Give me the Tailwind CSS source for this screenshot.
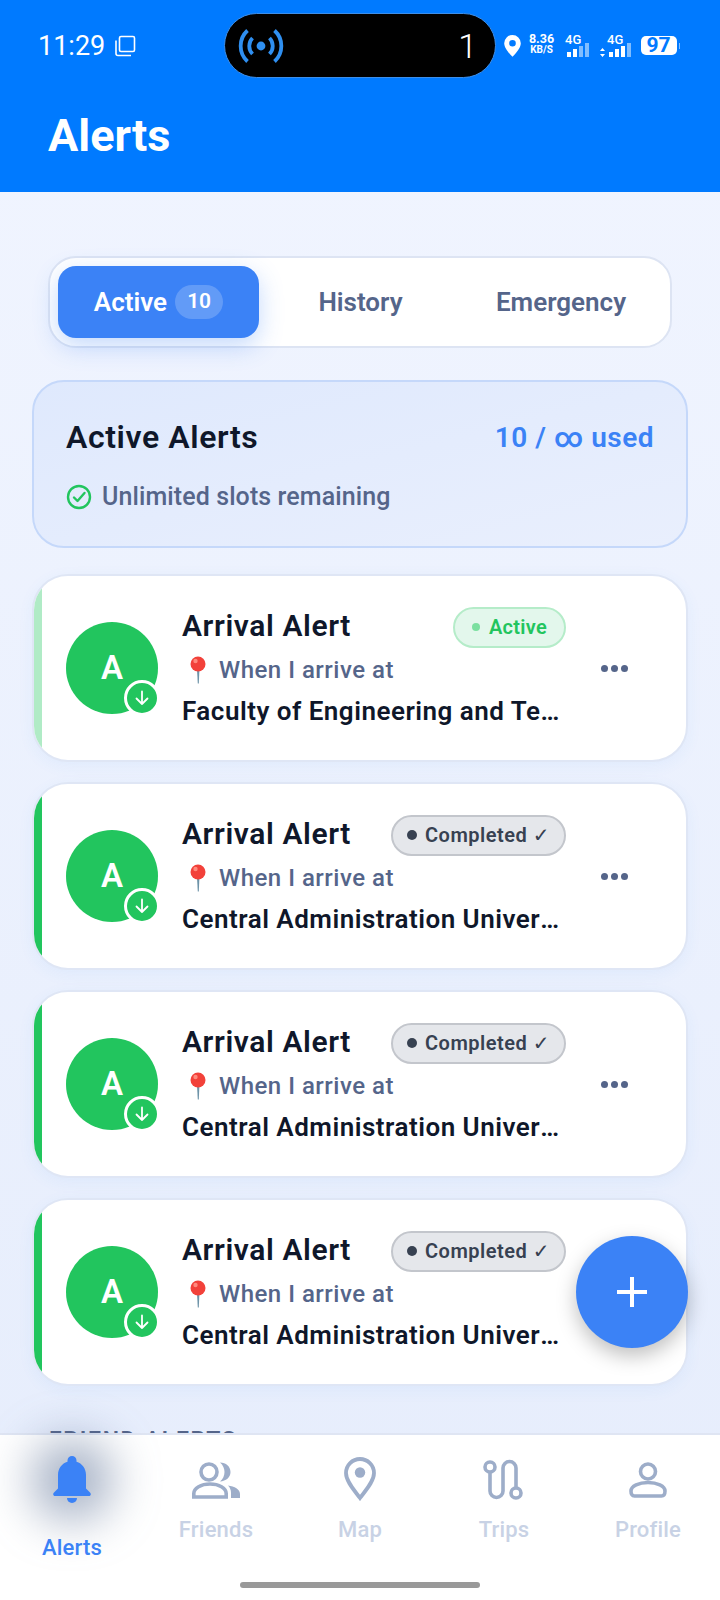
<!DOCTYPE html>
<html lang="en">
<head>
    <meta charset="UTF-8">
    <meta name="viewport" content="width=device-width, initial-scale=1.0">
    <title>Alerts</title>
    <script src="https://cdn.jsdelivr.net/npm/@tailwindcss/browser@4"></script>
</head>
<body class="font-['Roboto',sans-serif]">
<div class="relative w-[720px] h-[1600px] overflow-hidden flex flex-col bg-gradient-to-b from-[#f1f5ff] to-[#e6edfc]">

    <!-- Header -->
    <header class="h-[192px] shrink-0 bg-[#007aff] text-white">
        <div class="h-[111px] pt-[13px] flex items-start">
            <div class="w-[224px] pl-[38px] pt-[18px] flex items-center gap-[9px]">
                <span class="text-[27px] leading-[30px]">11:29</span>
                <svg class="w-[22px] h-[22px]" viewBox="0 0 22 22" fill="none" stroke="white" stroke-width="1.600">
                    <rect x="5.500" y="1.500" width="15" height="15" rx="1.500"></rect>
                    <path d="M2 5.500v13a2 2 0 0 0 2 2h13"></path>
                </svg>
            </div>
            <!-- camera pill -->
            <div class="w-[272px] h-[65px] rounded-full bg-black border border-[#3d8ee8] flex items-center justify-between pl-[13px] pr-[18px]">
                <svg class="w-[46px] h-[34px]" viewBox="0 0 46 34" fill="none" stroke="#2f8ff0" stroke-width="3.800">
                    <circle cx="23" cy="17" r="4.400" fill="#2f8ff0" stroke="none"></circle>
                    <path d="M14.500 9a11.500 11.500 0 0 0 0 16"></path>
                    <path d="M31.500 9a11.500 11.500 0 0 1 0 16"></path>
                    <path d="M9.500 1.500a21 21 0 0 0 0 31"></path>
                    <path d="M36.500 1.500a21 21 0 0 1 0 31"></path>
                </svg>
                <span class="text-[34px] font-light leading-none">1</span>
            </div>
            <div class="flex items-end pl-[8px] h-[44px]">
                <svg class="w-[17px] h-[22px]" viewBox="0 0 17 22" fill="white">
                    <path fill-rule="evenodd" d="M8.500 0a8.300 8.300 0 0 1 8.300 8.300c0 4.700-5 10.200-8.300 13.500C5.200 18.500.2 13 .2 8.300A8.300 8.300 0 0 1 8.500 0zm0 5a3.300 3.300 0 1 0 0 6.600 3.300 3.300 0 0 0 0-6.600z"></path>
                </svg>
                <div class="w-[25px] ml-[8px] mb-[2px] flex flex-col items-center font-bold">
                    <span class="text-[12.500px] leading-[12px]">8.36</span>
                    <span class="text-[10px] leading-[10px]">KB/S</span>
                </div>
                <div class="ml-[11px] w-[23px] flex flex-col items-start">
                    <span class="text-[13px] font-medium leading-[14px] mb-[-4px]">4G</span>
                    <div class="flex items-end gap-[2.500px] h-[14px] pl-[2px]">
                        <i class="w-[3.500px] h-[5px] bg-white"></i>
                        <i class="w-[3.500px] h-[8px] bg-white"></i>
                        <i class="w-[3.500px] h-[11px] bg-white/50"></i>
                        <i class="w-[3.500px] h-[14px] bg-white/50"></i>
                    </div>
                </div>
                <div class="ml-[12px] flex items-end">
                    <svg class="w-[5px] h-[9px] mr-[4px]" viewBox="0 0 5 9" fill="white"><path d="M2.500 0L5 3H0zM2.500 9L0 6h5z"></path></svg>
                    <div class="flex flex-col items-start">
                        <span class="text-[13px] font-medium leading-[14px] mb-[-4px] ml-[-2px]">4G</span>
                        <div class="flex items-end gap-[2.500px] h-[14px]">
                            <i class="w-[3.500px] h-[5px] bg-white"></i>
                            <i class="w-[3.500px] h-[8px] bg-white"></i>
                            <i class="w-[3.500px] h-[11px] bg-white"></i>
                            <i class="w-[3.500px] h-[14px] bg-white/50"></i>
                        </div>
                    </div>
                </div>
                <div class="ml-[10px] mb-[2px] flex items-center">
                    <div class="w-[36px] h-[19px] rounded-[5px] bg-white text-[#007aff] text-[21px] font-bold leading-[19px] text-center">97</div>
                    <i class="w-[1.500px] h-[6px] ml-[2px] bg-white/50"></i>
                </div>
            </div>
        </div>
        <h1 class="pl-[48px] text-[45px] font-bold leading-[50px]">Alerts</h1>
    </header>

    <!-- Tabs -->
    <div class="mt-[64px] mx-[48px] h-[92px] shrink-0 rounded-[28px] bg-white border-2 border-[#dde4f3] flex items-center pl-[8px]">
        <div class="w-[201px] h-[72px] rounded-[18px] bg-[#3b82f6] shadow-[0_8px_24px_rgba(59,130,246,0.3)] text-white text-[26px] font-semibold flex items-center justify-center gap-[8px]">
            Active
            <span class="w-[48px] h-[34px] rounded-full bg-white/20 text-[21px] flex items-center justify-center">10</span>
        </div>
        <div class="w-[203px] text-center text-[26px] font-semibold text-[#55658a]">History</div>
        <div class="w-[198px] text-center text-[26px] font-semibold text-[#55658a]">Emergency</div>
    </div>

    <!-- Usage summary -->
    <section class="mt-[32px] mx-[32px] h-[168px] shrink-0 rounded-[32px] border-2 border-[#c5d8fa] bg-gradient-to-br from-[#dfe9fd] to-[#e9effd] px-[32px] pt-[36px]">
        <div class="flex items-center justify-between h-[40px]">
            <h2 class="mb-[2px] text-[32px] font-semibold tracking-[0.6px] text-[#0f172a]">Active Alerts</h2>
            <span class="text-[28px] font-semibold tracking-[0.5px] text-[#3b82f6]">10 / ∞ used</span>
        </div>
        <div class="mt-[20px] flex items-center gap-[10px] text-[25px] font-medium tracking-[0.1px] text-[#55658a]">
            <svg class="w-[26px] h-[26px]" viewBox="0 0 26 26" fill="none" stroke="#22c55e" stroke-width="2.400" stroke-linecap="round" stroke-linejoin="round">
                <circle cx="13" cy="13" r="11"></circle>
                <path d="M8 13.500l3.500 3.500 7-8"></path>
            </svg>
            Unlimited slots remaining
        </div>
    </section>

    <!-- Alert cards -->
    <div class="mt-[26px] mx-[32px] flex flex-col gap-[20px] shrink-0">
        <article class="h-[188px] rounded-[36px] bg-white border-2 border-[#dfe6f5] shadow-[0_4px_16px_rgba(59,130,246,0.06)] overflow-hidden flex">
            <div class="w-[8px] bg-[#b0ebc6] shrink-0"></div>
            <div class="relative w-[92px] h-[92px] ml-[24px] mt-[46px] rounded-full bg-[#22c55e] text-white text-[33px] font-semibold flex items-center justify-center shrink-0">
                A
                <div class="absolute right-[-2px] bottom-[-2px] w-[36px] h-[36px] rounded-full bg-[#22c55e] border-[3px] border-white flex items-center justify-center">
                    <svg class="w-[18px] h-[18px]" viewBox="0 0 18 18" fill="none" stroke="white" stroke-width="1.800" stroke-linecap="round" stroke-linejoin="round"><path d="M9 2.500v12.500M3.500 9.500L9 15l5.500-5.500"></path></svg>
                </div>
            </div>
            <div class="w-[384px] ml-[24px] pt-[31px] shrink-0">
                <div class="h-[41px] flex items-center justify-between">
                    <h3 class="mb-[4px] text-[30px] font-semibold tracking-[0.6px] text-[#0f172a]">Arrival Alert</h3>
                    <span class="h-[41px] w-[113px] pb-[1px] rounded-full bg-[#e3f7ec] border-2 border-[#b5ecc9] text-[#22c55e] text-[20px] font-semibold tracking-[0.3px] flex items-center justify-center gap-[9px]">
                        <i class="w-[8px] h-[8px] rounded-full bg-[#7be0a0]"></i>Active
                    </span>
                </div>
                <div class="mt-[4px] h-[36px] flex items-center gap-[9px] pl-[4px] text-[24px] font-medium text-[#55658a] tracking-[0.5px]">
                    <svg class="w-[24px] h-[28px]" viewBox="0 0 24 28">
                        <path d="M11 14h2.400l-.6 13.500h-1z" fill="#6d93a8"></path>
                        <circle cx="12" cy="8" r="7.500" fill="#f2413a"></circle>
                        <circle cx="9.500" cy="5" r="2.200" fill="#ff8a7d"></circle>
                    </svg>
                    When I arrive at
                </div>
                <p class="mt-[6px] truncate text-[26px] leading-[34px] font-semibold text-[#0f172a] tracking-[0.5px]">Faculty of Engineering and Technology Building</p>
            </div>
            <div class="flex-1 flex items-center pl-[35px]">
                <div class="flex gap-[3px]"><i class="w-[7px] h-[7px] rounded-full bg-[#55658a]"></i><i class="w-[7px] h-[7px] rounded-full bg-[#55658a]"></i><i class="w-[7px] h-[7px] rounded-full bg-[#55658a]"></i></div>
            </div>
        </article>

        <article class="h-[188px] rounded-[36px] bg-white border-2 border-[#dfe6f5] shadow-[0_4px_16px_rgba(59,130,246,0.06)] overflow-hidden flex">
            <div class="w-[8px] bg-[#22c55e] shrink-0"></div>
            <div class="relative w-[92px] h-[92px] ml-[24px] mt-[46px] rounded-full bg-[#22c55e] text-white text-[33px] font-semibold flex items-center justify-center shrink-0">
                A
                <div class="absolute right-[-2px] bottom-[-2px] w-[36px] h-[36px] rounded-full bg-[#22c55e] border-[3px] border-white flex items-center justify-center">
                    <svg class="w-[18px] h-[18px]" viewBox="0 0 18 18" fill="none" stroke="white" stroke-width="1.800" stroke-linecap="round" stroke-linejoin="round"><path d="M9 2.500v12.500M3.500 9.500L9 15l5.500-5.500"></path></svg>
                </div>
            </div>
            <div class="w-[384px] ml-[24px] pt-[31px] shrink-0">
                <div class="h-[41px] flex items-center justify-between">
                    <h3 class="mb-[4px] text-[30px] font-semibold tracking-[0.6px] text-[#0f172a]">Arrival Alert</h3>
                    <span class="h-[41px] w-[175px] pb-[1px] rounded-full bg-[#e5e7eb] border-2 border-[#c3c6cc] text-[#374151] text-[20px] font-semibold tracking-[0.5px] flex items-center justify-center gap-[8px]">
                        <i class="w-[10px] h-[10px] rounded-full bg-[#374151]"></i><span>Completed <span class="font-normal font-['DejaVu_Sans',sans-serif]">✓</span></span>
                    </span>
                </div>
                <div class="mt-[4px] h-[36px] flex items-center gap-[9px] pl-[4px] text-[24px] font-medium text-[#55658a] tracking-[0.5px]">
                    <svg class="w-[24px] h-[28px]" viewBox="0 0 24 28">
                        <path d="M11 14h2.400l-.6 13.500h-1z" fill="#6d93a8"></path>
                        <circle cx="12" cy="8" r="7.500" fill="#f2413a"></circle>
                        <circle cx="9.500" cy="5" r="2.200" fill="#ff8a7d"></circle>
                    </svg>
                    When I arrive at
                </div>
                <p class="mt-[6px] truncate text-[26px] leading-[34px] font-semibold text-[#0f172a] tracking-[0.5px]">Central Administration University Building</p>
            </div>
            <div class="flex-1 flex items-center pl-[35px]">
                <div class="flex gap-[3px]"><i class="w-[7px] h-[7px] rounded-full bg-[#55658a]"></i><i class="w-[7px] h-[7px] rounded-full bg-[#55658a]"></i><i class="w-[7px] h-[7px] rounded-full bg-[#55658a]"></i></div>
            </div>
        </article>

        <article class="h-[188px] rounded-[36px] bg-white border-2 border-[#dfe6f5] shadow-[0_4px_16px_rgba(59,130,246,0.06)] overflow-hidden flex">
            <div class="w-[8px] bg-[#22c55e] shrink-0"></div>
            <div class="relative w-[92px] h-[92px] ml-[24px] mt-[46px] rounded-full bg-[#22c55e] text-white text-[33px] font-semibold flex items-center justify-center shrink-0">
                A
                <div class="absolute right-[-2px] bottom-[-2px] w-[36px] h-[36px] rounded-full bg-[#22c55e] border-[3px] border-white flex items-center justify-center">
                    <svg class="w-[18px] h-[18px]" viewBox="0 0 18 18" fill="none" stroke="white" stroke-width="1.800" stroke-linecap="round" stroke-linejoin="round"><path d="M9 2.500v12.500M3.500 9.500L9 15l5.500-5.500"></path></svg>
                </div>
            </div>
            <div class="w-[384px] ml-[24px] pt-[31px] shrink-0">
                <div class="h-[41px] flex items-center justify-between">
                    <h3 class="mb-[4px] text-[30px] font-semibold tracking-[0.6px] text-[#0f172a]">Arrival Alert</h3>
                    <span class="h-[41px] w-[175px] pb-[1px] rounded-full bg-[#e5e7eb] border-2 border-[#c3c6cc] text-[#374151] text-[20px] font-semibold tracking-[0.5px] flex items-center justify-center gap-[8px]">
                        <i class="w-[10px] h-[10px] rounded-full bg-[#374151]"></i><span>Completed <span class="font-normal font-['DejaVu_Sans',sans-serif]">✓</span></span>
                    </span>
                </div>
                <div class="mt-[4px] h-[36px] flex items-center gap-[9px] pl-[4px] text-[24px] font-medium text-[#55658a] tracking-[0.5px]">
                    <svg class="w-[24px] h-[28px]" viewBox="0 0 24 28">
                        <path d="M11 14h2.400l-.6 13.500h-1z" fill="#6d93a8"></path>
                        <circle cx="12" cy="8" r="7.500" fill="#f2413a"></circle>
                        <circle cx="9.500" cy="5" r="2.200" fill="#ff8a7d"></circle>
                    </svg>
                    When I arrive at
                </div>
                <p class="mt-[6px] truncate text-[26px] leading-[34px] font-semibold text-[#0f172a] tracking-[0.5px]">Central Administration University Building</p>
            </div>
            <div class="flex-1 flex items-center pl-[35px]">
                <div class="flex gap-[3px]"><i class="w-[7px] h-[7px] rounded-full bg-[#55658a]"></i><i class="w-[7px] h-[7px] rounded-full bg-[#55658a]"></i><i class="w-[7px] h-[7px] rounded-full bg-[#55658a]"></i></div>
            </div>
        </article>

        <article class="h-[188px] rounded-[36px] bg-white border-2 border-[#dfe6f5] shadow-[0_4px_16px_rgba(59,130,246,0.06)] overflow-hidden flex">
            <div class="w-[8px] bg-[#22c55e] shrink-0"></div>
            <div class="relative w-[92px] h-[92px] ml-[24px] mt-[46px] rounded-full bg-[#22c55e] text-white text-[33px] font-semibold flex items-center justify-center shrink-0">
                A
                <div class="absolute right-[-2px] bottom-[-2px] w-[36px] h-[36px] rounded-full bg-[#22c55e] border-[3px] border-white flex items-center justify-center">
                    <svg class="w-[18px] h-[18px]" viewBox="0 0 18 18" fill="none" stroke="white" stroke-width="1.800" stroke-linecap="round" stroke-linejoin="round"><path d="M9 2.500v12.500M3.500 9.500L9 15l5.500-5.500"></path></svg>
                </div>
            </div>
            <div class="w-[384px] ml-[24px] pt-[31px] shrink-0">
                <div class="h-[41px] flex items-center justify-between">
                    <h3 class="mb-[4px] text-[30px] font-semibold tracking-[0.6px] text-[#0f172a]">Arrival Alert</h3>
                    <span class="h-[41px] w-[175px] pb-[1px] rounded-full bg-[#e5e7eb] border-2 border-[#c3c6cc] text-[#374151] text-[20px] font-semibold tracking-[0.5px] flex items-center justify-center gap-[8px]">
                        <i class="w-[10px] h-[10px] rounded-full bg-[#374151]"></i><span>Completed <span class="font-normal font-['DejaVu_Sans',sans-serif]">✓</span></span>
                    </span>
                </div>
                <div class="mt-[4px] h-[36px] flex items-center gap-[9px] pl-[4px] text-[24px] font-medium text-[#55658a] tracking-[0.5px]">
                    <svg class="w-[24px] h-[28px]" viewBox="0 0 24 28">
                        <path d="M11 14h2.400l-.6 13.500h-1z" fill="#6d93a8"></path>
                        <circle cx="12" cy="8" r="7.500" fill="#f2413a"></circle>
                        <circle cx="9.500" cy="5" r="2.200" fill="#ff8a7d"></circle>
                    </svg>
                    When I arrive at
                </div>
                <p class="mt-[6px] truncate text-[26px] leading-[34px] font-semibold text-[#0f172a] tracking-[0.5px]">Central Administration University Building</p>
            </div>
        </article>
    </div>

    <h4 class="mt-[41px] ml-[49px] text-[23px] leading-[28px] font-semibold tracking-[1.700px] text-[#55658a] shrink-0">FRIEND ALERTS</h4>

    <!-- Add button -->
    <button class="absolute left-[576px] top-[1236px] w-[112px] h-[112px] rounded-full bg-[#3b82f6] shadow-[0_8px_20px_rgba(0,0,0,0.25)] flex items-center justify-center">
        <svg class="w-[32px] h-[32px]" viewBox="0 0 32 32" stroke="white" stroke-width="4"><path d="M16 1v30M1 16h30"></path></svg>
    </button>

    <!-- Bottom nav -->
    <nav class="absolute left-0 right-0 bottom-0 h-[167px] bg-white border-t-2 border-[#dfe5f3] grid grid-cols-5 text-[22px] leading-[26px] font-medium tracking-[0.2px] text-[#c8d2e5]">
        <div class="relative flex flex-col items-center">
            <div class="absolute left-[32px] top-[5px] w-[80px] h-[80px] rounded-full bg-[#54698f]/55 blur-[24px]"></div>
            <div class="relative mt-[20px] h-[50px] flex items-center">
                <svg class="w-[38px] h-[48px]" viewBox="0 0 38 48" fill="#3b82f6">
                    <path d="M19 0a4.500 4.500 0 0 1 4.500 4.500v1.300C29 7.500 33 12.500 33 19v13.500l4 4c1.500 1.500.7 3.500-1.200 3.500H2.200C.3 40-.5 38 1 36.500l4-4V19C5 12.500 9 7.500 14.500 5.800V4.500A4.500 4.500 0 0 1 19 0z"></path>
                    <path d="M14 42h10a5 5 0 0 1-10 0z"></path>
                </svg>
            </div>
            <span class="relative mt-[30px] text-[#3b82f6]">Alerts</span>
        </div>
        <div class="flex flex-col items-center">
            <div class="mt-[20px] h-[50px] flex items-center">
                <svg class="w-[48px] h-[38px]" viewBox="0 0 48 38" fill="#9dadc9">
                    <circle cx="17" cy="11" r="8" fill="none" stroke="#9dadc9" stroke-width="3.600"></circle>
                    <path d="M1.800 36v-3.500C1.800 27 9 23 18 23s16.200 4 16.200 9.500V36z" fill="none" stroke="#9dadc9" stroke-width="3.600"></path>
                    <path d="M28 1.500c6 0 10.500 4 10.500 9.500S34 20 28 20.500c3-2.500 4.500-6 4.500-9.500S31 4 28 1.500z"></path>
                    <path d="M36 24.500c6.500 1 12 3.500 12 8.500v4H39v-5c0-3-1-5.500-3-7.500z"></path>
                </svg>
            </div>
            <span class="mt-[12px]">Friends</span>
        </div>
        <div class="flex flex-col items-center">
            <div class="mt-[20px] h-[50px] flex items-start">
                <svg class="mt-[2px] w-[32px] h-[44px]" viewBox="0 0 32 44" fill="none" stroke="#9dadc9" stroke-width="3.800">
                    <path d="M16 2C8.300 2 2 8.200 2 16c0 8.500 8.500 17.500 14 25 5.500-7.500 14-16.500 14-25C30 8.200 23.700 2 16 2z"></path>
                    <circle cx="16" cy="15.500" r="5.200" fill="#9dadc9" stroke="none"></circle>
                </svg>
            </div>
            <span class="mt-[12px]">Map</span>
        </div>
        <div class="flex flex-col items-center">
            <div class="mt-[20px] h-[50px] flex items-center">
                <svg class="w-[42px] h-[42px]" viewBox="0 0 42 42" fill="none" stroke="#9dadc9" stroke-width="3.600">
                    <circle cx="7" cy="8" r="5"></circle>
                    <circle cx="33" cy="34" r="5"></circle>
                    <path d="M7 13v19a6.500 6.500 0 0 0 13 0V9a6.500 6.500 0 0 1 13 0v20"></path>
                </svg>
            </div>
            <span class="mt-[12px]">Trips</span>
        </div>
        <div class="flex flex-col items-center">
            <div class="mt-[20px] h-[50px] flex items-center">
                <svg class="w-[38px] h-[36px]" viewBox="0 0 38 36" fill="none" stroke="#9dadc9" stroke-width="3.600">
                    <circle cx="19" cy="9.500" r="7.500"></circle>
                    <path d="M2 29c0-5 8-8.500 17-8.500S36 24 36 29c0 3-1 5-3.500 5h-27C3 34 2 32 2 29z"></path>
                </svg>
            </div>
            <span class="mt-[12px]">Profile</span>
        </div>
        <div class="absolute left-[240px] bottom-[12px] w-[240px] h-[6px] rounded-full bg-[#999999]"></div>
    </nav>
</div>
</body>
</html>
